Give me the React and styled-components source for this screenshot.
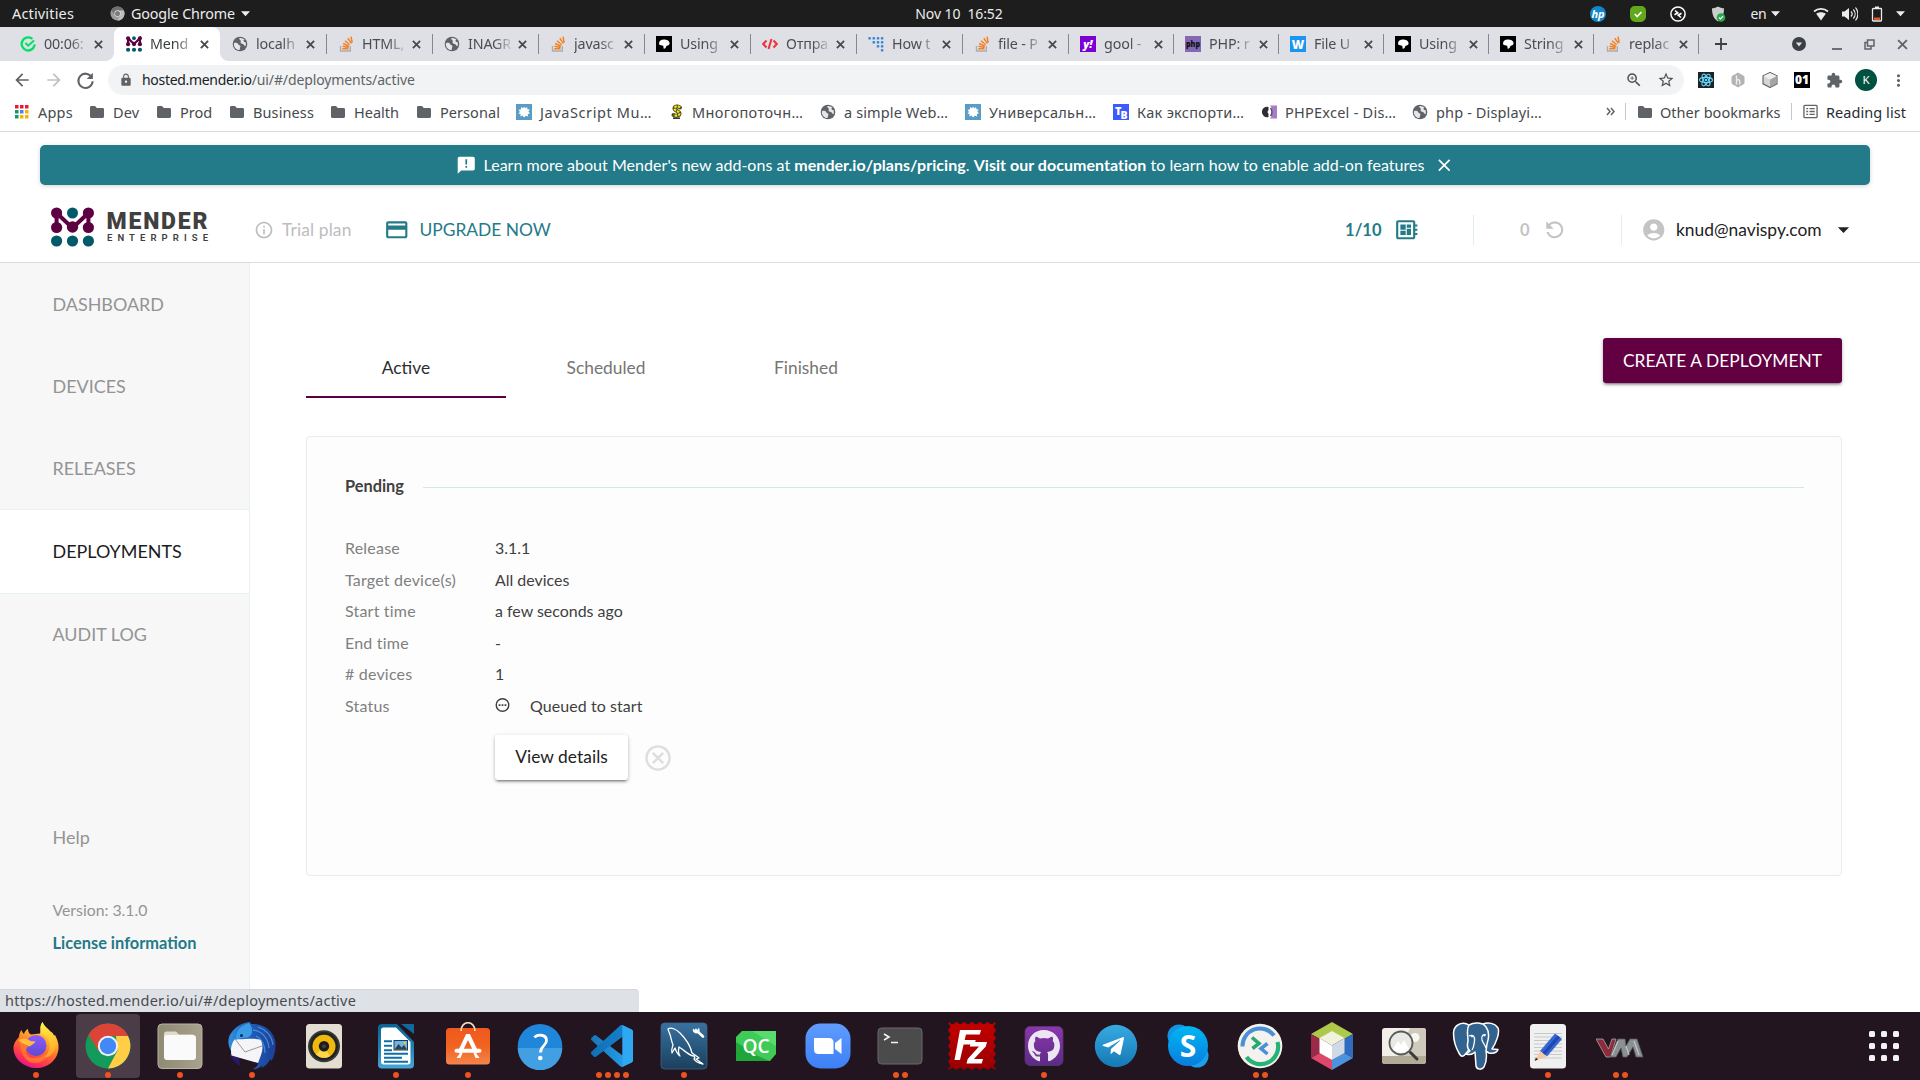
import React from "react";
import styled, { createGlobalStyle, css } from "styled-components";
import {
  MdAnnouncement,
  MdClose,
  MdInfoOutline,
  MdPayment,
  MdDeveloperBoard,
  MdRefresh,
  MdAccountCircle,
  MdArrowDropDown,
  MdLock,
  MdArrowBack,
  MdArrowForward,
  MdExtension,
  MdMoreVert,
  MdStarBorder,
  MdZoomIn,
} from "react-icons/md";
import { FaGithub, FaTelegramPlane } from "react-icons/fa";

const GlobalStyle = createGlobalStyle`
  *, *::before, *::after { box-sizing: border-box; }
  html, body { margin: 0; padding: 0; background: #fff; overflow: hidden; }
  svg { display: block; flex: none; }
`;

const uiFont = css`
  font-family: "Noto Sans", "Open Sans", sans-serif;
`;

const Desktop = styled.div`
  display: flex;
  flex-direction: column;
  width: 1920px;
  height: 1080px;
  overflow: hidden;
  ${uiFont}
`;

const Label = styled.span`
  white-space: pre;
  font-size: ${(p) => p.$size || 14.5}px;
  letter-spacing: ${(p) => p.$ls || 0}px;
  color: ${(p) => p.$color || "inherit"};
`;

/* ---------- system bar ---------- */

const SystemBar = styled.header`
  display: grid;
  grid-template-columns: 1fr auto 1fr;
  align-items: center;
  height: 27px;
  flex: none;
  padding: 0 14px 0 12px;
  background: #1d1d1d;
  color: #ececec;
  line-height: 27px;
`;

const SystemLeft = styled.div`
  display: flex;
  align-items: center;
`;

const AppMenu = styled.div`
  display: flex;
  align-items: center;
  gap: 6px;
  margin-left: 36px;
`;

const Tray = styled.div`
  display: flex;
  align-items: center;
  justify-content: flex-end;
`;

const TraySlot = styled.div`
  display: flex;
  align-items: center;
  justify-content: center;
  gap: 5px;
  width: ${(p) => p.$w}px;
  padding-right: ${(p) => p.$pr || 0}px;
`;

const Triangle = ({ size = 10, color = "#ececec" }) => (
  <svg width={size} height={size} viewBox="0 0 10 10">
    <path d="M0 2.5h10L5 8z" fill={color} />
  </svg>
);

/* ---------- browser chrome ---------- */

const TabStrip = styled.div`
  display: flex;
  height: 34px;
  flex: none;
  padding-left: 8px;
  background: #dee0e5;
`;

const BrowserTab = styled.div`
  display: flex;
  align-items: center;
  width: ${(p) => p.$w}px;
  height: 34px;
  padding-left: 12px;
  position: relative;
  color: ${(p) => (p.$active ? "#3c4043" : "#4a4d51")};
  background: ${(p) => (p.$active ? "#fff" : "transparent")};
  border-radius: ${(p) => (p.$active ? "8px 8px 0 0" : "0")};
  ${(p) =>
    p.$divider &&
    css`
      &::before {
        content: "";
        position: absolute;
        left: 0;
        top: 7px;
        width: 1px;
        height: 20px;
        background: #85888d;
      }
    `}
  ${(p) =>
    p.$active &&
    css`
      &::before,
      &::after {
        content: "";
        position: absolute;
        bottom: 0;
        width: 8px;
        height: 8px;
      }
      &::before {
        left: -8px;
        background: radial-gradient(circle at 0 0, transparent 7.5px, #fff 8px);
      }
      &::after {
        right: -8px;
        background: radial-gradient(circle at 100% 0, transparent 7.5px, #fff 8px);
      }
    `}
`;

const TabTitle = styled.div`
  width: 45px;
  margin-left: 8px;
  white-space: pre;
  font-size: 14.3px;
  letter-spacing: -0.15px;
  line-height: 24px;
  mask-image: linear-gradient(to right, #000 58%, rgba(0, 0, 0, 0.06) 100%);
`;

const TabClose = styled.div`
  margin-left: 5px;
`;

const StripEnd = styled.div`
  display: flex;
  flex: 1;
  align-items: center;
  position: relative;
  padding-left: 17px;
  &::before {
    content: "";
    position: absolute;
    left: 0;
    top: 7px;
    width: 1px;
    height: 20px;
    background: #85888d;
  }
`;

const WindowButtons = styled.div`
  display: flex;
  align-items: center;
  margin-left: auto;
  padding-right: 12px;
  gap: 22px;
`;

const Toolbar = styled.div`
  display: flex;
  align-items: center;
  height: 38px;
  flex: none;
  background: #fff;
  color: #5f6368;
`;

const NavButtons = styled.div`
  display: flex;
  align-items: center;
  gap: 12px;
  width: 108px;
  padding-left: 12px;
`;

const Omnibox = styled.div`
  display: flex;
  align-items: center;
  width: 1576px;
  height: 30px;
  padding: 0 9px 0 11px;
  border-radius: 15px;
  background: #f1f3f4;
`;

const Url = styled.div`
  flex: 1;
  display: flex;
  margin-left: 9px;
  line-height: 28px;
`;

const OmniActions = styled.div`
  display: flex;
  gap: 14px;
  color: #4d5156;
`;

const Extensions = styled.div`
  display: flex;
  align-items: center;
  padding-left: 6px;
`;

const ExtensionSlot = styled.div`
  display: flex;
  align-items: center;
  justify-content: center;
  width: 32px;
`;

const BookmarkBar = styled.div`
  display: flex;
  align-items: center;
  height: 33px;
  flex: none;
  padding: 0 0 7px 14px;
  background: #fff;
  border-bottom: 1px solid #dadce0;
  color: #46494d;
`;

const Bookmark = styled.div`
  display: flex;
  align-items: center;
  gap: ${(p) => p.$gap || 8}px;
  width: ${(p) => p.$w}px;
  height: 24px;
`;

const BarDivider = styled.div`
  width: 1px;
  height: 17px;
  background: #c4c7cc;
  margin: ${(p) => p.$m};
`;

const Chevrons = styled.div`
  margin-left: 8px;
`;

/* ---------- page ---------- */

const Page = styled.div`
  display: flex;
  flex-direction: column;
  height: 880px;
  flex: none;
  position: relative;
  background: #fff;
  font-family: Lato, "Open Sans", sans-serif;
  color: #404040;
`;

const Banner = styled.div`
  display: flex;
  align-items: center;
  justify-content: center;
  height: 40px;
  flex: none;
  margin: 13px 50px 0 40px;
  border-radius: 5px;
  background: #237a88;
  box-shadow: 0 1px 4px rgba(0, 0, 0, 0.18);
  color: #fff;
  font-size: 16px;
  white-space: pre;
`;

const BannerText = styled.div`
  margin: 0 9px 1px 7px;
  letter-spacing: 0.035px;
  b { font-weight: 700; }
`;

const AppHeader = styled.div`
  display: flex;
  align-items: center;
  height: 78px;
  flex: none;
  padding: 12px 0 0 50px;
  border-bottom: 1px solid #dedede;
  font-size: 17.4px;
`;

const PlanInfo = styled.div`
  display: flex;
  align-items: center;
  gap: 8px;
  width: 130px;
  margin-left: 43px;
  letter-spacing: 0.12px;
  color: #bdbdbd;
`;

const Upgrade = styled.div`
  display: flex;
  align-items: center;
  gap: 10px;
  color: #237a88;
`;

const HeaderRight = styled.div`
  display: flex;
  align-items: center;
  margin-left: auto;
`;

const Counter = styled.div`
  display: flex;
  align-items: center;
  justify-content: flex-end;
  width: ${(p) => p.$w}px;
  height: 30px;
  padding-right: ${(p) => p.$pr}px;
  gap: ${(p) => p.$gap}px;
  border-right: 1px solid #e3efee;
  color: ${(p) => p.$color};
  font-weight: 700;
  font-size: 16.5px;
`;

const User = styled.div`
  display: flex;
  align-items: center;
  width: 298px;
  padding-left: 19px;
  color: #222;
`;

const UserName = styled.span`
  margin: 0 8px 0 9.5px;
`;

const Flip = styled.span`
  transform: scaleX(-1);
`;

const Body = styled.div`
  display: flex;
  flex: 1;
`;

const Sidebar = styled.nav`
  display: flex;
  flex-direction: column;
  width: 250px;
  flex: none;
  background: #f7f7f7;
  border-right: 1px solid #e6f2f1;
`;

const NavItem = styled.div`
  display: flex;
  align-items: center;
  height: ${(p) => (p.$active ? 85 : 82)}px;
  padding: 0 0 1px 52.5px;
  margin-bottom: ${(p) => (p.$active ? -1 : 0)}px;
  font-size: 17.95px;
  color: ${(p) => (p.$active ? "#1c1c1c" : "#949494")};
  background: ${(p) => (p.$active ? "#fff" : "transparent")};
  border-style: solid;
  border-color: #e6f2f1;
  border-width: ${(p) => (p.$active ? "1px 0" : "0")};
`;

const SidebarFooter = styled.div`
  margin-top: 150px;
  padding-left: 52.5px;
  color: #949494;
`;

const Help = styled.div`
  font-size: 18px;
  line-height: 24px;
`;

const Version = styled.div`
  margin-top: 50px;
  font-size: 15.8px;
  line-height: 22px;
`;

const License = styled.div`
  margin-top: 11px;
  font-size: 16.4px;
  line-height: 22px;
  font-weight: 700;
  color: #237a88;
`;

const Main = styled.main`
  flex: 1;
  padding: 75px 78px 0 56px;
`;

const MainTop = styled.div`
  display: flex;
  justify-content: space-between;
  align-items: flex-start;
`;

const TabList = styled.div`
  display: flex;
`;

const PageTab = styled.div`
  display: flex;
  align-items: center;
  justify-content: center;
  width: 200px;
  height: 60px;
  padding-top: 1px;
  font-size: 17.35px;
  color: ${(p) => (p.$active ? "#2e2e2e" : "#757575")};
  border-bottom: 2px solid ${(p) => (p.$active ? "#5d0041" : "transparent")};
`;

const Button = styled.button`
  display: flex;
  align-items: center;
  justify-content: center;
  width: ${(p) => p.$w}px;
  height: 45px;
  padding: 0 0 ${(p) => (p.$primary ? 0 : 2)}px;
  border: 0;
  border-radius: 3px;
  font-family: inherit;
  font-size: 17.35px;
  letter-spacing: 0.05px;
  color: ${(p) => (p.$primary ? "#fff" : "#222")};
  background: ${(p) => (p.$primary ? "#620042" : "#fff")};
  box-shadow: 0 3px 2px -2px rgba(0, 0, 0, 0.3), 0 2px 3px rgba(0, 0, 0, 0.2),
    0 1px 5px rgba(0, 0, 0, 0.14);
`;

const Card = styled.section`
  height: 440px;
  margin-top: 38px;
  padding: 37px 37px 0 38px;
  background: #fdfdfd;
  border: 1px solid #ebebeb;
  border-radius: 4px;
`;

const SectionTitle = styled.div`
  display: flex;
  align-items: center;
  gap: 19px;
  line-height: 24px;
  font-size: 16.35px;
  font-weight: 700;
  &::after {
    content: "";
    flex: 1;
    height: 1px;
    margin-top: 2px;
    background: #d3e8e5;
  }
`;

const Details = styled.div`
  display: grid;
  grid-template-columns: 150px auto;
  grid-auto-rows: 31.5px;
  align-items: center;
  margin-top: 34px;
  font-size: 15.95px;
`;

const Term = styled.div`
  font-size: 16px;
  letter-spacing: 0.2px;
  color: #808080;
`;

const Value = styled.div`
  display: flex;
  align-items: center;
  color: #404040;
`;

const StatusText = styled.span`
  margin-left: 20px;
  letter-spacing: 0.1px;
`;

const Actions = styled.div`
  display: flex;
  align-items: center;
  gap: 17px;
  margin: 14px 0 0 150px;
`;

const StatusBubble = styled.div`
  position: absolute;
  left: 0;
  bottom: 0;
  width: 639px;
  height: 23px;
  padding-left: 5px;
  background: #dee1e6;
  border-top: 1px solid #d3d6da;
  border-radius: 0 4px 0 0;
  color: #484b4f;
  line-height: 21px;
  ${uiFont}
`;

/* ---------- dock ---------- */

const Dock = styled.footer`
  display: flex;
  align-items: flex-start;
  gap: 8px;
  height: 68px;
  flex: none;
  padding: 2px 12px 0 4px;
  background: #22151f;
`;

const DockCell = styled.div`
  display: flex;
  flex-direction: column;
  align-items: center;
  width: 64px;
  height: 64px;
  padding-top: 8px;
  border-radius: 4px;
  background: ${(p) => (p.$active ? "#4a3d47" : "transparent")};
`;

const Dots = styled.div`
  display: flex;
  gap: 3px;
  margin-top: 2px;
`;

const Dot = styled.i`
  width: 6px;
  height: 6px;
  border-radius: 50%;
  background: #e95420;
`;

const AppGrid = styled.div`
  display: grid;
  grid-template-columns: repeat(3, 6px);
  gap: 6px;
  margin: 17px 9px 0 auto;
`;

const GridDot = styled.i`
  width: 6px;
  height: 6px;
  border-radius: 1.5px;
  background: #f2f2f2;
`;

/* ---------- small icons ---------- */

const S = ({ s = 16, children }) => (
  <svg width={s} height={s} viewBox="0 0 16 16">
    {children}
  </svg>
);

const Globe = () => (
  <S>
    <circle cx="8" cy="8" r="7.3" fill="#5f6368" />
    <path d="M1.900 7.200c2-.9 4-.2 4.300 1 .3 1.200 1.900.6 2.200 1.700.3 1.100-.7 1.500-.5 2.500.1.800-.4 1.400-.8 1.700C4.300 13.800 1.900 11.500 1.900 8z" fill="#e4e6ea" />
    <path d="M7.200 2.200c1.600-.5 4.100.2 5.300 1.800-.9 0-1.300.6-.9 1.300.4.700 1.300.7 1.900.9.500.9.600 2.700-.2 4-.9-.1-1-1.100-1.700-1.800-.9-.8-2.300-.2-2.800-1.300C8.300 5.900 9 5.500 8.800 4.700 8.600 3.900 7.100 3.500 7.200 2.200z" fill="#e4e6ea" />
  </S>
);

const StackIcon = () => (
  <S>
    <path d="M2.500 10v5h9.800v-5" fill="none" stroke="#a9adb2" strokeWidth="1.400" />
    <g stroke="#f48024" strokeWidth="1.500" fill="none">
      <path d="M4.300 12.800h6.200M4.500 10.300l6.100 1.200M5.200 7.500l5.600 2.700M7 4.700l4.700 4M9.800 2.300l3.600 5.100M13 .6l1.200 6" />
    </g>
  </S>
);

const BlackHead = () => (
  <S>
    <path d="M0 0h16v16H0z" fill="#000" />
    <path d="M3 7.500C3 5 5 3.500 8 3.500c2.500 0 5.300 1 5.600 3.500.1 1.800-1.500 2.600-3 2.700L9.500 12 7.800 13l-.6-3.200L5 9.300C3.800 9 3 8.500 3 7.500z" fill="#fff" />
  </S>
);

const MenderMark = () => (
  <svg width="16" height="16" viewBox="0 0 43 43">
    <path d="M5.600 6v15M5.600 6l15.900 15.500L37.400 6v15" stroke="#5d0041" strokeWidth="6" fill="none" />
    <g fill="#5d0041">
      <circle cx="5.600" cy="6" r="5.600" />
      <circle cx="37.400" cy="6" r="5.600" />
      <circle cx="5.600" cy="22" r="5.600" />
      <circle cx="21.500" cy="21.500" r="5.800" />
      <circle cx="37.400" cy="22" r="5.600" />
    </g>
    <g fill="#015969">
      <circle cx="21.500" cy="6" r="5" />
      <circle cx="5.600" cy="37" r="5.600" />
      <circle cx="21.500" cy="37" r="5.600" />
      <circle cx="37.400" cy="37" r="5.600" />
    </g>
  </svg>
);

const ClockCheck = () => (
  <S>
    <path d="M11.500 2.300A6.500 6.500 0 1 0 14.500 9.500" fill="none" stroke="#03e066" strokeWidth="2.400" strokeLinecap="round" />
    <path d="M6 7.500l2.200 2.200L13.500 5" fill="none" stroke="#03e066" strokeWidth="2" strokeLinecap="round" />
  </S>
);

const CodeTag = () => (
  <S>
    <path d="M4.500 4.500L1.200 8l3.300 3.500M11.500 4.500L14.800 8l-3.300 3.500M9.500 3l-3 10" fill="none" stroke="#f0323c" strokeWidth="2" />
  </S>
);

const BlueDots = () => (
  <S>
    <g fill="#3f86d8">
      {[[1.5, 1], [5.700, 1], [9.900, 1], [14, 1], [5.700, 5], [9.900, 5], [14, 5], [9.900, 9], [14, 9], [14, 13]].map(([x, y]) => (
        <rect key={`${x}-${y}`} x={x - 1.2} y={y} width="2.600" height="2.600" rx="0.900" />
      ))}
    </g>
  </S>
);

const LetterTile = ({ bg, color = "#fff", text, size = 11, x = 8, y = 12, italic, len }) => (
  <S>
    <path d="M0 0h16v16H0z" fill={bg} />
    <text x={x} y={y} textAnchor="middle" fontFamily="Open Sans, sans-serif" fontWeight="800" fontSize={size} fontStyle={italic ? "italic" : "normal"} fill={color} textLength={len} lengthAdjust="spacingAndGlyphs">
      {text}
    </text>
  </S>
);

const TBIcon = () => (
  <S>
    <path d="M0 0h16v16H0z" fill="#3b5bfd" />
    <text x="5.300" y="10.500" textAnchor="middle" fontFamily="Open Sans, sans-serif" fontWeight="800" fontSize="11" fill="#fff">T</text>
    <text x="11" y="14.500" textAnchor="middle" fontFamily="Open Sans, sans-serif" fontWeight="800" fontSize="10.500" fill="#fff">B</text>
  </S>
);

const BlueSplat = () => (
  <S>
    <path d="M0 0h16v16H0z" fill="#5a9dc4" />
    <path d="M8 2.500l1.200 1.800 2-1.300.2 2.300 2.400.3-1.400 2L14 9.500l-2.200.6.300 2.400-2.200-.8L8 13.500l-1.400-1.900-2.200.9.300-2.400L2.300 9.500 4 8 2.500 5.800l2.300-.4.400-2.300 2 1.200z" fill="#fff" />
  </S>
);

const Snake = () => (
  <S>
    <path d="M10 3.500C8.500 1.800 4.500 2 4.500 4.500S9.500 7 9.500 9.500 5.500 12 3.500 11" fill="none" stroke="#4a4a1c" strokeWidth="4" strokeLinecap="round" />
    <path d="M10 3.500C8.500 1.800 4.500 2 4.500 4.500S9.500 7 9.500 9.500 5.500 12 3.500 11" fill="none" stroke="#f1e51c" strokeWidth="2.200" strokeDasharray="2.500 1" />
    <path d="M3 14.200h7" stroke="#222" strokeWidth="1.400" />
  </S>
);

const BracketMark = () => (
  <S>
    <path d="M7.500 3v3.200a2.200 2.200 0 0 0 0 3.600V13a5.200 5.200 0 1 1 0-10z" fill="#2b2f31" />
    <path d="M9 1.500h7v13H9c3.200-3 3.200-10 0-13z" fill="#a77bc6" />
    <path d="M9.500 4c2 2 2 6 0 8" fill="none" stroke="#5d3b78" strokeWidth="1.500" />
  </S>
);

const AppsIcon = () => {
  const colors = ["#ea1a36", "#ea1a36", "#ea1a36", "#0f9d58", "#4285f4", "#f4b400", "#0f9d58", "#f4b400", "#f4b400"];
  return (
    <S>
      {colors.map((c, i) => (
        <rect key={i} x={1 + (i % 3) * 5} y={1 + Math.floor(i / 3) * 5} width="3.500" height="3.500" fill={c} />
      ))}
    </S>
  );
};

const FolderIcon = () => (
  <S>
    <path d="M1 3.500C1 2.700 1.500 2 2.300 2H6l1.800 2h5.900c.8 0 1.300.6 1.300 1.400v7.200c0 .8-.5 1.400-1.300 1.400H2.300C1.500 14 1 13.400 1 12.600z" fill="#5f6368" />
  </S>
);

const Cross = ({ s = 9, color = "#45484c", w = 1.8 }) => (
  <svg width={s} height={s} viewBox="0 0 9 9">
    <path d="M.9.9l7.200 7.200M8.100.9L.9 8.100" stroke={color} strokeWidth={w} />
  </svg>
);

const ReloadIcon = () => (
  <S s={19}>
    <path d="M13.200 5.200A6 6 0 1 0 14 8.600" fill="none" stroke="#5f6368" strokeWidth="1.700" />
    <path d="M14.200 1.500v5.200H9z" fill="#5f6368" />
  </S>
);

const CancelIcon = () => (
  <svg width="26" height="26" viewBox="0 0 26 26">
    <circle cx="13" cy="13" r="11.600" fill="none" stroke="#dedede" strokeWidth="2.400" />
    <path d="M7.800 7.800l10.400 10.400M18.200 7.800L7.800 18.200" stroke="#dedede" strokeWidth="2.500" />
  </svg>
);

/* ---------- dock icons ---------- */

const D = ({ children }) => (
  <svg width="48" height="48" viewBox="0 0 48 48">
    {children}
  </svg>
);

const Grad = ({ id, stops, horizontal }) => (
  <linearGradient id={id} x1="0" y1="0" x2={horizontal ? 1 : 0} y2={horizontal ? 0 : 1}>
    {stops.map((c, i) => (
      <stop key={i} offset={i / (stops.length - 1)} stopColor={c} />
    ))}
  </linearGradient>
);

const Firefox = () => (
  <D>
    <defs>
      <linearGradient id="ffBody" x1="0.8" y1="0" x2="0.35" y2="1">
        <stop offset="0" stopColor="#fff44f" />
        <stop offset="0.35" stopColor="#ffb02e" />
        <stop offset="0.6" stopColor="#ff6a2e" />
        <stop offset="0.85" stopColor="#ff2f58" />
        <stop offset="1" stopColor="#e31587" />
      </linearGradient>
      <Grad id="ffCore" stops={["#9059ff", "#5b4bd0"]} />
      <Grad id="ffFlame" stops={["#fff44f", "#ffc531", "#ff9a2b"]} />
    </defs>
    <path d="M7 15c0-3 1-5 2.500-7 .5 2 1.500 3 2.500 4 .8-2.500 2-4 4-5 0 3 1 4.500 3 5.500l9-1C29 7 28 4 30.500 0c1.500 4 5 6 8 9.500 2 1 3 2.500 3.500 4l1-.5C45 17 47 21 46.500 26 46 38 36 46 24.500 46S2 38 1.500 26.500C1.300 22 4 18 7 15z" fill="url(#ffBody)" />
    <path d="M30.500 0c-3 4-2.500 8-.5 12 6 3 9 9 7 16-1 4-4 7-7 8.500C41 35 46 27 43 16 39 9 32 6 30.500 0z" fill="url(#ffFlame)" />
    <circle cx="24" cy="23.500" r="10.500" fill="url(#ffCore)" />
    <path d="M8 18c4-1 7 0 9 2l3 3c-5 1-7 4-6 8 1 3 4 5 8 5 6 0 10-2 12-6 1 7-4 11-11 11C13 41 8 30 8 18z" fill="#ff7a2b" opacity="0.850" />
    <path d="M6.500 18c4-2.500 9-2 12 1l5 .5c-1 2.500-4 3-6 5C14 22 9 22 6.500 18z" fill="#ffbd3a" />
  </D>
);

const Chrome = ({ size = 48, gray }) => (
  <svg width={size} height={size} viewBox="0 0 48 48">
    <circle cx="24" cy="24" r="22.500" fill={gray ? "#9c9c9c" : "#149b5c"} />
    <path d="M24 24L4.500 12.800A22.500 22.500 0 0 1 43.500 12.800L44 14H24z" fill={gray ? "#6f6f6f" : "#dc4437"} />
    <path d="M44 14A22.500 22.500 0 0 1 24 46.500L33.500 28.500 32 14z" fill={gray ? "#bdbdbd" : "#ffce44"} />
    <path d="M4.500 12.800L14.500 29l9.500-15z" fill={gray ? "#6f6f6f" : "#dc4437"} />
    <circle cx="24" cy="24" r="10.200" fill={gray ? "#e4e4e4" : "#f1f1f1"} />
    <circle cx="24" cy="24" r="8.200" fill={gray ? "#7d7d7d" : "#4388f7"} />
  </svg>
);

const Files = () => (
  <D>
    <defs><Grad id="fl" stops={["#8f8a74", "#a8a18d"]} horizontal /></defs>
    <rect x="2" y="2" width="44" height="44.500" rx="4" fill="url(#fl)" stroke="#b8b3a2" />
    <path d="M8 12c0-1.500 1-2.500 2.500-2.500h9c2 0 2 3 4.500 3h13V20H8z" fill="#dedacd" />
    <rect x="8" y="13" width="32" height="25" rx="3" fill="#fafafa" />
  </D>
);

const Thunderbird = () => (
  <D>
    <defs><Grad id="tb" stops={["#2f8fe0", "#1f5cb8", "#1d3f96"]} horizontal /></defs>
    <path d="M14 2c5-2 8-2 8-2l1 2c14-1 23 8 24.500 18 .5 8-1 14-4 19l-1-2c-2 4-5 7-9 9l1-3c-4 4-8 4.500-10 4 3-1 5-3 6-6L8 34C2 30-1 22 1 15 3 10 8 4 14 2z" fill="url(#tb)" />
    <path d="M2 32c2 6 6 10 11 12-2-3-2-6-1-8z" fill="#2a1a63" />
    <path d="M7 17c6 1 20-2 26 1 2 5 2 10 0 15l-3 8L3.500 33.500C2 27 4 20 7 17z" fill="#f5f5f7" />
    <path d="M7 17l10 13 17-6" fill="none" stroke="#8d8d98" strokeWidth="0.900" />
    <path d="M8 15C9 7 14 3 21 1c4 5 4 10 1 13-4 3-9 1-14 4z" fill="#3b9ce6" />
    <circle cx="13.500" cy="13.500" r="1.500" fill="#15264f" />
    <path d="M25 8c9 1 15 8 16 18M28 14c6 3 9 9 9 17M30 5c9 3 14 10 15 18" stroke="#5fb4f0" strokeWidth="1.300" fill="none" opacity="0.600" />
  </D>
);

const Rhythmbox = () => (
  <D>
    <rect x="6" y="2" width="36" height="44.500" rx="3.500" fill="#e2ded2" />
    <circle cx="24" cy="24.300" r="16" fill="#3a3a3a" />
    <circle cx="24" cy="24.300" r="14.200" fill="#222" />
    <circle cx="24" cy="24.300" r="11.500" fill="#eeb80f" />
    <path d="M24 24.300l-8 8.200A11.500 11.500 0 0 0 30 34.200z" fill="#ffd84a" />
    <circle cx="24" cy="24.300" r="5.200" fill="#1d1d1d" />
    <circle cx="24" cy="24.300" r="2" fill="#3f3f3f" />
  </D>
);

const Writer = () => (
  <D>
    <defs><Grad id="wr" stops={["#0a6394", "#1f7fb2", "#45a6d8"]} /></defs>
    <path d="M10 2h15l17 18v23c0 2-1.500 3.500-3.500 3.500H9.500C7.500 46.500 6 45 6 43V6c0-2.500 1.500-4 4-4z" fill="url(#wr)" />
    <path d="M29 2h12c.7 0 1 .5 1 1v9z" fill="#106a9d" />
    <path d="M9 8c0-1.500 1-2.500 2.500-2.500H24L38.500 20v20c0 1.500-1 2.500-2.500 2.500H11.500C10 42.500 9 41.500 9 40z" fill="#fff" />
    <path d="M12 19h8M12 23.500h8M12 28h8M12 31.500h24M12 35.500h18M12 39.500h24" transform="translate(0 .3)" stroke="#106fa5" strokeWidth="1.900" />
    <rect x="22" y="18.500" width="13.500" height="9.500" fill="#6fb5e4" stroke="#123f66" strokeWidth="1" />
    <path d="M22.500 27.500l4-5.500 3 3.500 2.500-2.500 3 4.500z" fill="#39413f" />
    <circle cx="32.800" cy="20.800" r="1.300" fill="#f3c22d" />
  </D>
);

const Software = () => (
  <D>
    <defs><Grad id="sw" stops={["#f0581f", "#f2631f", "#f4854e"]} /></defs>
    <rect x="2" y="6" width="44" height="36.500" rx="3.500" fill="url(#sw)" />
    <path d="M17 9c0-11 14-11 14 0" fill="none" stroke="#f6d9b8" strokeWidth="1.700" />
    <path d="M15.500 31L24 13l8.500 18" fill="none" stroke="#fff" strokeWidth="4.200" strokeLinejoin="bevel" />
    <path d="M12.500 28.800h23" stroke="#fff" strokeWidth="4" strokeLinecap="round" />
    <path d="M16 31l-3.500 5h4l2-5zM32 31l3.500 5h-4l-2-5z" fill="#fff" />
  </D>
);

const HelpIcon = () => (
  <D>
    <circle cx="24" cy="24.300" r="22.300" fill="#1f86d9" />
    <path d="M1.700 26a22.300 22.300 0 0 0 44.600 0z" fill="#429fe1" />
    <path d="M18.500 15.500c2.500-3.500 12-3.500 12 3 0 5-6 5.500-6 12" fill="none" stroke="#fff" strokeWidth="2.800" />
    <circle cx="24.300" cy="36" r="2.300" fill="#fff" />
  </D>
);

const VSCode = () => (
  <D>
    <defs><Grad id="vs" stops={["#1b74b8", "#1f8fd8", "#2aa3ef"]} horizontal /></defs>
    <g transform="translate(3 3) scale(1.75)">
      <path d="M23.150 2.587L18.210.210a1.494 1.494 0 0 0-1.705.290l-9.460 8.630-4.120-3.128a.999.999 0 0 0-1.276.057L.327 7.261A1 1 0 0 0 .326 8.740L3.899 12 .326 15.260a1 1 0 0 0 .001 1.479L1.650 17.940a.999.999 0 0 0 1.276.057l4.120-3.128 9.460 8.630a1.492 1.492 0 0 0 1.704.290l4.942-2.377A1.500 1.500 0 0 0 24 20.060V3.939a1.500 1.500 0 0 0-.850-1.352zm-5.146 14.861L10.826 12l7.178-5.448v10.896z" fill="url(#vs)" />
      <path d="M3.899 12L.326 15.260a1 1 0 0 0 .001 1.479L1.650 17.940a1 1 0 0 0 1.276.057l4.120-3.128L10.826 12 18 6.552V.200a1.500 1.500 0 0 0-1.500.300z" fill="#0b6cb5" opacity="0.600" />
      <path d="M18 .200V23.800l5.150-2.400c.5-.240.850-.750.850-1.340V3.939c0-.580-.330-1.100-.850-1.352z" fill="#2fa8f3" />
    </g>
  </D>
);

const Workbench = () => (
  <D>
    <defs><Grad id="wb" stops={["#39719f", "#28597f", "#1c3f5c"]} /></defs>
    <rect x="1" y="1" width="46" height="46" rx="3.500" fill="url(#wb)" stroke="#3b6488" strokeWidth="0.800" />
    <path d="M12 31c-1-3 0-5 1-8-2-5-2-9-4-13l-1-3c3-2 8 0 12 4 5 5 10 11 12 20 3 2 5 3 7 5l-3 1 7 5c-5-1-8-3-9-5 1-1 1-2 0-3-4 0-8-4-12-7-1-1-2-1-3-2-1 4-1 6 1 9-3-2-4-5-5-8-1 2-2 3-3 5z" fill="none" stroke="#fff" strokeWidth="1.300" strokeLinejoin="round" />
    <path d="M36 8l7 6.500" stroke="#fff" strokeWidth="2.600" strokeLinecap="round" />
    <path d="M33 6.500a3.600 3.600 0 0 0 5 4.500 3.600 3.600 0 0 0 .6-5.500l-.6 2.500-2.600.6z" fill="#fff" />
  </D>
);

const QtCreator = () => (
  <D>
    <path d="M10 9h34v23l-6 7H4V15z" fill="#3fcb57" />
    <path d="M4 20l22 14 12 5H4z" fill="#20a53b" />
    <path d="M20 9h24v15z" fill="#58dc6e" />
    <text x="24" y="30.500" textAnchor="middle" fontFamily="Open Sans, sans-serif" fontWeight="600" fontSize="19" fill="#fff" textLength="27" lengthAdjust="spacingAndGlyphs">QC</text>
  </D>
);

const Zoom = () => (
  <D>
    <defs><Grad id="zm" stops={["#5f9cff", "#3d80f5"]} /></defs>
    <rect x="1.500" y="1.500" width="45" height="45" rx="15" fill="url(#zm)" />
    <path d="M10 16h15c3 0 4.500 1.500 4.500 4.500V32h-15c-3 0-4.500-1.500-4.500-4.500zM31 21l6.500-5v16L31 27z" fill="#fff" />
  </D>
);

const Terminal = () => (
  <D>
    <rect x="2" y="6" width="44" height="36" rx="3.500" fill="#4b4b4b" stroke="#686868" strokeWidth="1" />
    <path d="M8 12l5 3-5 3M15 20.500h7" fill="none" stroke="#f2f2f2" strokeWidth="1.600" />
  </D>
);

const FileZilla = () => (
  <D>
    <defs><Grad id="fz" stops={["#c30000", "#9a0000"]} /></defs>
    <path d="M.5.5h47v47H.5z" fill="url(#fz)" />
    <g fill="#22151f">
      {[4.500, 12.300, 20.100, 27.900, 35.700, 43.500].map((v) => (
        <React.Fragment key={v}>
          <circle cx={v} cy="0" r="2.300" />
          <circle cx={v} cy="48" r="2.300" />
          <circle cx="0" cy={v} r="2.300" />
          <circle cx="48" cy={v} r="2.300" />
        </React.Fragment>
      ))}
    </g>
    <path d="M12 8h21l-1.200 4.500H18l-1.300 5.500h11l-1.200 4.500H15.600L12 38H6.500z" fill="#fff" />
    <path d="M23 20h16l-1.200 4.500L26 37h9l-1.200 4.500H18.500l1.200-4.500L31 24.500h-9.200z" fill="#fff" />
  </D>
);

const GitHubDesk = () => (
  <D>
    <defs><Grad id="gh" stops={["#8c36ae", "#5c2b86"]} /></defs>
    <rect x="5" y="4.500" width="38" height="39" rx="5" fill="url(#gh)" stroke="#57396f" strokeWidth="0.800" />
    <FaGithub x="7.500" y="7.500" size={33} color="#ece6f2" />
  </D>
);

const Telegram = () => (
  <D>
    <defs><Grad id="tg" stops={["#37aae2", "#1578b4"]} /></defs>
    <circle cx="24" cy="24" r="21.200" fill="url(#tg)" />
    <FaTelegramPlane x="9" y="12" size={24.500} color="#fff" />
  </D>
);

const Skype = () => (
  <D>
    <defs><Grad id="sk" stops={["#00b7f5", "#0a7ddd"]} /></defs>
    <circle cx="15" cy="14" r="11.500" fill="#1393e0" />
    <circle cx="33" cy="34" r="11.500" fill="#18a1e8" />
    <circle cx="24" cy="24" r="20" fill="url(#sk)" />
    <text x="24" y="35" textAnchor="middle" fontFamily="Open Sans, sans-serif" fontWeight="700" fontSize="30" fill="#fff">S</text>
  </D>
);

const Remote = () => (
  <D>
    <circle cx="24" cy="24" r="22.300" fill="#f4f2ee" />
    <path d="M6.500 24.500A17.500 17.500 0 0 1 38 13.500" fill="none" stroke="#4a90d9" strokeWidth="4" />
    <path d="M41.500 20A17.500 17.500 0 0 1 10.500 35" fill="none" stroke="#27b376" strokeWidth="4.200" />
    <path d="M16 15.500l7 6-6.500 5" fill="none" stroke="#27a86c" strokeWidth="3.600" />
    <path d="M31.500 21.500l-6.500 5 6.500 5.500" fill="none" stroke="#4a90d9" strokeWidth="3.600" />
  </D>
);

const NetBeans = () => (
  <D>
    <path d="M24 0l21 12-9 5-12-7-12 7-9-5z" fill="#aec84a" />
    <path d="M3 12l9 5v14l-9 5z" fill="#9a2a48" />
    <path d="M45 12l-9 5v14l9 5z" fill="#2f6cc0" />
    <path d="M3 36l9-5 12 7v10z" fill="#de4769" />
    <path d="M45 36l-9-5-12 7v10z" fill="#4c93de" />
    <path d="M24 9l12.500 7L24 23.500 11.500 16z" fill="#eff2dc" />
    <path d="M11.500 16L24 23.500V38l-12.500-7z" fill="#fff" />
    <path d="M36.500 16L24 23.500V38l12.500-7z" fill="#cfdae5" />
  </D>
);

const ImageViewer = () => (
  <D>
    <rect x="2" y="6" width="44" height="36" rx="3" fill="#f1efe8" />
    <path d="M30 6h13c2 0 3 1 3 3v25H18z" fill="#cfcabb" />
    <path d="M2 34h44v5c0 2-1 3-3 3H5c-2 0-3-1-3-3z" fill="#b1ab98" />
    <circle cx="35" cy="15.500" r="4.500" fill="#f7f7f4" />
    <circle cx="21" cy="21" r="11.500" fill="#e9e9e6" stroke="#5a5a58" strokeWidth="1.800" />
    <path d="M13 27l5-8 3 4 3-5 5 9c-4 5-12 5-16 0z" fill="#fff" />
    <path d="M30.500 30.500l6.500 6.500" stroke="#3a3a38" strokeWidth="3" strokeLinecap="round" />
  </D>
);

const Postgres = () => (
  <D>
    <g fill="#32638e" stroke="#fff" strokeWidth="1.500" strokeLinejoin="round">
      <path d="M15 2C9 0 2 3 1.500 11c0 7 3 16 6 21 2 3.500 4 2.500 6 0l5-6 2-20z" />
      <path d="M31 2c5-2 12-1 15 4 2 5-2 15-6 21l6 .5c-1 3-5 4-9 3.500l-5-3-3-20z" />
      <path d="M17 3c5-3 14-3 17 2 3 4 3 11 1 17l-1 7c1 6 0 12-2 16-2 3-7 3-8-1l-1-14c-3 3-6 3-9 2l4-3c-3-2-3-6-2-10 0-6-2-12 1-16z" />
    </g>
    <path d="M17 14c4-1.500 6 0 5.500 5-.5 3-.5 6-2.500 9M34 13c-3-1-5 1-4 5 1 3 3 5 4 8" fill="none" stroke="#fff" strokeWidth="1.300" />
    <circle cx="20" cy="14.500" r="0.900" fill="#fff" />
    <circle cx="32.500" cy="13.500" r="0.900" fill="#fff" />
  </D>
);

const Notes = () => (
  <D>
    <rect x="6" y="2" width="36" height="44.500" rx="3.500" fill="#f0f0f0" />
    <path d="M10 11.500h28M10 15h28M10 18.500h28M10 22h28M10 25.500h28M10 29h28M10 32.500h28M10 36h28" stroke="#c9c9c9" strokeWidth="1" />
    <path d="M31 11.500l7 5.500-15 17.500-7-5.500z" fill="#3566d6" />
    <path d="M33.500 13.500l2.400 1.900L20.800 33l-2.400-2z" fill="#1f49b0" />
    <path d="M16 29l7 5.500-12.500 4.500z" fill="#f6c9a2" />
    <path d="M12 35.500l2 2-3.500 1.500z" fill="#2b2b2b" />
  </D>
);

const VirtualMachine = () => (
  <D>
    <path d="M0 17h7l5.500 10L16 17h4l-5.500 18H10z" fill="#8e2a3c" stroke="#a8a8a8" strokeWidth="0.800" />
    <path d="M14 35l8-18h7l1 7 4-7h7l6 18h-7l-3-10-6 10h-4l-2-9-5 9z" fill="#8b9092" stroke="#55595b" strokeWidth="0.800" />
    <path d="M22 19l-6 14M30 24l3 9M38 19l5 14" stroke="#c3c6c7" strokeWidth="1.200" />
  </D>
);

/* ---------- data ---------- */

const YahooIcon = () => <LetterTile bg="#7a00d4" text="y!" italic size={11} />;
const PhpIcon = () => <LetterTile bg="#8467b5" color="#111" text="php" size={9} y={11} len={14} />;
const WIcon = () => <LetterTile bg="#1a96f0" text="W" size={12} y={12.5} />;

const browserTabs = [
  ["00:06:", ClockCheck],
  ["Mend", MenderMark],
  ["localh", Globe],
  ["HTML,", StackIcon],
  ["INAGR", Globe],
  ["javasc", StackIcon],
  ["Using", BlackHead],
  ["Отпра", CodeTag],
  ["How t", BlueDots],
  ["file - P", StackIcon],
  ["gool -", YahooIcon],
  ["PHP: r", PhpIcon],
  ["File U", WIcon],
  ["Using", BlackHead],
  ["String", BlackHead],
  ["replac", StackIcon],
];

const bookmarks = [
  ["Apps", AppsIcon, 75, 0.2],
  ["Dev", FolderIcon, 67, 0.2],
  ["Prod", FolderIcon, 73, 0],
  ["Business", FolderIcon, 101, 0.11],
  ["Health", FolderIcon, 86, 0],
  ["Personal", FolderIcon, 100, 0.06],
  ["JavaScript Mu…", BlueSplat, 154, 0.6],
  ["Многопоточн…", Snake, 150, 0.38, 6],
  ["a simple Web…", Globe, 145, 0.12],
  ["Универсальн…", BlueSplat, 148, 0.3],
  ["Как экспорти…", TBIcon, 148, 0.3],
  ["PHPExcel - Dis…", BracketMark, 151, 0.25],
  ["php - Displayi…", Globe, 186, 0.14],
];

const navItems = ["DASHBOARD", "DEVICES", "RELEASES", "DEPLOYMENTS", "AUDIT LOG"];

const dockApps = [
  [Firefox, 1], [Chrome, 1, true], [Files, 1], [Thunderbird, 1], [Rhythmbox, 0], [Writer, 1],
  [Software, 1], [HelpIcon, 0], [VSCode, 4], [Workbench, 1], [QtCreator, 0], [Zoom, 0],
  [Terminal, 2], [FileZilla, 0], [GitHubDesk, 1], [Telegram, 0], [Skype, 0], [Remote, 2],
  [NetBeans, 0], [ImageViewer, 0], [Postgres, 0], [Notes, 1], [VirtualMachine, 2],
];

const PendingIcon = () => (
  <S s={15}>
    <circle cx="8" cy="7.500" r="6.700" fill="none" stroke="#404040" strokeWidth="1.500" />
    <path d="M3.900 6.600h1.900v1.900H3.900zM7.050 6.600h1.900v1.900h-1.900zM10.200 6.600h1.900v1.900h-1.900z" fill="#404040" />
  </S>
);

const details = [
  ["Release", "3.1.1"],
  ["Target device(s)", "All devices"],
  ["Start time", "a few seconds ago"],
  ["End time", "-"],
  ["# devices", "1"],
  ["Status", <React.Fragment key="s"><PendingIcon /><StatusText>Queued to start</StatusText></React.Fragment>],
];

const BrandLogo = () => (
  <svg width="161" height="49" viewBox="0 0 161 49">
    <svg x="1" y="2" width="43" height="40" viewBox="0 0 43 40">
      <path d="M5.600 6v15M5.600 6L21.500 21 37.400 6v15" fill="none" stroke="#5d0041" strokeWidth="4" />
      <g fill="#5d0041">
        <circle cx="5.600" cy="6" r="5.600" />
        <circle cx="37.400" cy="6" r="5.600" />
        <circle cx="5.600" cy="20.500" r="5.600" />
        <circle cx="21.500" cy="20" r="5.700" />
        <circle cx="37.400" cy="20.500" r="5.600" />
      </g>
      <g fill="#015969">
        <circle cx="21.500" cy="6" r="5.500" />
        <circle cx="5.600" cy="34" r="5.600" />
        <circle cx="21.500" cy="34" r="5.600" />
        <circle cx="37.400" cy="34" r="5.600" />
      </g>
    </svg>
    <text x="56.500" y="24.300" fontFamily="Roboto, sans-serif" fontWeight="900" fontSize="23" fill="#404040" textLength="101" lengthAdjust="spacing">MENDER</text>
    <text x="57" y="36" fontFamily="Roboto, sans-serif" fontWeight="600" fontSize="9.500" fill="#404040" textLength="101" lengthAdjust="spacing">ENTERPRISE</text>
  </svg>
);

export default function App() {
  return (
    <Desktop>
      <GlobalStyle />
      <SystemBar>
        <SystemLeft>
          <Label $ls={0.16}>Activities</Label>
          <AppMenu>
            <Chrome size={15} gray />
            <Label $size={14.3} $ls={-0.12}>Google Chrome</Label>
            <Triangle size={9} />
          </AppMenu>
        </SystemLeft>
        <Label $size={14} $ls={-0.1}>Nov 10  16:52</Label>
        <Tray>
          <TraySlot $w={40}>
            <S>
              <circle cx="8" cy="8" r="8" fill="#1287c8" />
              <text x="8" y="12" textAnchor="middle" fontFamily="Open Sans, sans-serif" fontStyle="italic" fontWeight="700" fontSize="11" fill="#fff">hp</text>
            </S>
          </TraySlot>
          <TraySlot $w={40}>
            <S>
              <path d="M5 0h6c3 0 5 2 5 5v5c0 4-3 6-6 6H6c-4 0-6-3-6-6V5c0-3 2-5 5-5z" fill="#62a81b" />
              <path d="M4.700 8l2.500 2.500L11.500 6" fill="none" stroke="#fff" strokeWidth="1.700" />
            </S>
          </TraySlot>
          <TraySlot $w={40}>
            <S>
              <circle cx="8" cy="8" r="7.100" fill="none" stroke="#fff" strokeWidth="1.500" />
              <path d="M5 4.500l2.800 2.300L4.500 8.800M11 11.500L8.200 9.200l3.300-2" fill="none" stroke="#fff" strokeWidth="1.600" />
            </S>
          </TraySlot>
          <TraySlot $w={40}>
            <S>
              <path d="M8 .5c2 1.200 4 1.800 6 1.800 0 6-1.500 10.500-6 13.200C3.500 12.800 2 8.300 2 2.300 4 2.300 6 1.700 8 .5z" fill="#c9cdcb" />
              <circle cx="11" cy="11.500" r="4.300" fill="#2aa84f" />
              <path d="M9 11.500l1.500 1.500 2.500-2.800" fill="none" stroke="#fff" strokeWidth="1.200" />
            </S>
          </TraySlot>
          <TraySlot $w={64} $pr={9}>
            <Label $size={14} $ls={-0.3}>en</Label>
            <Triangle size={9} />
          </TraySlot>
          <TraySlot $w={38}>
            <S>
              <path d="M8 14.500L3.200 7.800C6 5.800 10 5.800 12.800 7.800z" fill="#ececec" />
              <path d="M1 5.500c4-3.500 10-3.500 14 0" fill="none" stroke="#ececec" strokeWidth="1.800" />
            </S>
          </TraySlot>
          <TraySlot $w={20}>
            <S>
              <path d="M0 5.500h2.500L7 2v12l-4.500-3.500H0z" fill="#ececec" />
              <path d="M9 5.500c1.300 1.400 1.300 3.600 0 5M11.300 3.500c2.400 2.600 2.400 6.400 0 9M13.500 1.500c3 4 3 9 0 13" fill="none" stroke="#ececec" strokeWidth="1.200" />
            </S>
          </TraySlot>
          <TraySlot $w={34}>
            <S>
              <path d="M6 1.500h4" stroke="#ececec" strokeWidth="2" />
              <rect x="3.500" y="2.500" width="9" height="12.500" rx="0.800" fill="none" stroke="#ececec" strokeWidth="1.300" />
              <path d="M5 11.500h6V14H5z" fill="#e95420" />
            </S>
          </TraySlot>
          <TraySlot $w={12}><Triangle size={9} /></TraySlot>
        </Tray>
      </SystemBar>

      <TabStrip>
        {browserTabs.map(([title, Icon], i) => (
          <BrowserTab key={i} $w={i < 10 ? 106 : 105} $active={i === 1} $divider={i > 2}>
            <Icon />
            <TabTitle>{title}</TabTitle>
            <TabClose><Cross /></TabClose>
          </BrowserTab>
        ))}
        <StripEnd>
          <svg width="12" height="12" viewBox="0 0 12 12"><path d="M6 0v12M0 6h12" stroke="#3c4043" strokeWidth="1.800" /></svg>
          <WindowButtons>
            <svg width="14" height="14" viewBox="0 0 14 14"><circle cx="7" cy="7" r="7" fill="#3c4043" /><path d="M3.800 5.500h6.400L7 9.500z" fill="#dee0e5" /></svg>
            <svg width="14" height="14" viewBox="-4 0 14 14"><path d="M0 12h10" stroke="#5f6368" strokeWidth="1.800" /></svg>
            <svg width="11" height="11" viewBox="0 0 11 11"><path d="M3.500 1h6.500v6H3.500zM3.500 3.500H1V10h6V7" fill="none" stroke="#5f6368" strokeWidth="1.500" /></svg>
            <Cross s={11} color="#5f6368" w={1.500} />
          </WindowButtons>
        </StripEnd>
      </TabStrip>

      <Toolbar>
        <NavButtons>
          <MdArrowBack size={20} />
          <MdArrowForward size={20} color="#bdc1c6" />
          <ReloadIcon />
        </NavButtons>
        <Omnibox>
          <MdLock size={14} />
          <Url>
            <Label $size={14} $ls={-0.31} $color="#202124">hosted.mender.io</Label>
            <Label $size={14} $ls={-0.12} $color="#5f6368">/ui/#/deployments/active</Label>
          </Url>
          <OmniActions>
            <MdZoomIn size={18} />
            <MdStarBorder size={18} />
          </OmniActions>
        </Omnibox>
        <Extensions>
          <ExtensionSlot>
            <S>
              <path d="M0 0h16v16H0z" fill="#1e2227" />
              <g fill="none" stroke="#61dafb" strokeWidth="1.100">
                <ellipse cx="8" cy="8" rx="6.500" ry="2.600" />
                <ellipse cx="8" cy="8" rx="6.500" ry="2.600" transform="rotate(60 8 8)" />
                <ellipse cx="8" cy="8" rx="6.500" ry="2.600" transform="rotate(120 8 8)" />
              </g>
              <circle cx="8" cy="8" r="1.300" fill="#61dafb" />
            </S>
          </ExtensionSlot>
          <ExtensionSlot>
            <S>
              <path d="M8 1l6 3.500v7L8 15l-6-3.500v-7z" fill="#b3b3b3" stroke="#b3b3b3" strokeLinejoin="round" />
              <path d="M6.500 3.500v9M6.500 9c.5-1.800 3.200-1.800 3.200.2v3.300" fill="none" stroke="#eee" strokeWidth="1.400" />
            </S>
          </ExtensionSlot>
          <ExtensionSlot>
            <S>
              <path d="M8 .5l7 3.300v8L8 15.500l-7-3.700v-8z" fill="#d5d5d5" stroke="#5e5e5e" strokeWidth="1.100" />
              <path d="M8 7.500l6.500-3.500v7.700L8 15z" fill="#a5a5a5" />
              <path d="M8 7.500L1.500 4 8 1l6.500 3z" fill="#efefef" />
            </S>
          </ExtensionSlot>
          <ExtensionSlot><LetterTile bg="#000" text="01" size={12} y={12.3} len={14} /></ExtensionSlot>
          <ExtensionSlot><MdExtension size={17} /></ExtensionSlot>
          <ExtensionSlot>
            <svg width="22" height="22" viewBox="0 0 22 22">
              <circle cx="11" cy="11" r="11" fill="#00513f" />
              <text x="11" y="15" textAnchor="middle" fontFamily="Noto Sans, sans-serif" fontSize="11.500" fill="#fff">K</text>
            </svg>
          </ExtensionSlot>
          <ExtensionSlot><MdMoreVert size={19} /></ExtensionSlot>
        </Extensions>
      </Toolbar>

      <BookmarkBar>
        {bookmarks.map(([title, Icon, w, ls, gap]) => (
          <Bookmark key={title} $w={w} $gap={gap}>
            <Icon />
            <Label $ls={ls}>{title}</Label>
          </Bookmark>
        ))}
        <Chevrons>
          <svg width="9" height="9" viewBox="0 0 9 9"><path d="M1 1l3 3.500L1 8M5 1l3 3.500L5 8" fill="none" stroke="#5f6368" strokeWidth="1.500" /></svg>
        </Chevrons>
        <BarDivider $m="0 11px 0 10px" />
        <Bookmark $w={154} $gap={7}>
          <FolderIcon />
          <Label $ls={0.03}>Other bookmarks</Label>
        </Bookmark>
        <BarDivider $m="0 11px 0 0" />
        <Bookmark $w={110}>
          <svg width="15" height="15" viewBox="0 0 16 16">
            <rect x="1" y="1.500" width="14" height="13" rx="1" fill="none" stroke="#5f6368" strokeWidth="1.400" />
            <path d="M3.500 5h2M3.500 8h2M3.500 11h2M7 5h5.500M7 8h5.500M7 11h5.500" stroke="#5f6368" strokeWidth="1.400" />
          </svg>
          <Label $ls={0.06} $color="#2a2c2f">Reading list</Label>
        </Bookmark>
      </BookmarkBar>

      <Page>
        <Banner>
          <MdAnnouncement size={20.500} />
          <BannerText>
            Learn more about Mender's new add-ons at <b>mender.io/plans/pricing</b>. <b>Visit our documentation</b> to learn how to enable add-on features
          </BannerText>
          <MdClose size={20.500} />
        </Banner>
        <AppHeader>
          <BrandLogo />
          <PlanInfo>
            <MdInfoOutline size={20} />
            Trial plan
          </PlanInfo>
          <Upgrade>
            <MdPayment size={25.500} />
            UPGRADE NOW
          </Upgrade>
          <HeaderRight>
            <Counter $w={160} $pr={54} $gap={12} $color="#237a88">
              1/10
              <MdDeveloperBoard size={25.500} />
            </Counter>
            <Counter $w={148} $pr={54} $gap={12} $color="#c4c4c4">
              0
              <Flip><MdRefresh size={25.500} /></Flip>
            </Counter>
            <User>
              <MdAccountCircle size={25.500} color="#c4c4c4" />
              <UserName>knud@navispy.com</UserName>
              <MdArrowDropDown size={27} />
            </User>
          </HeaderRight>
        </AppHeader>
        <Body>
          <Sidebar>
            {navItems.map((item) => (
              <NavItem key={item} $active={item === "DEPLOYMENTS"}>{item}</NavItem>
            ))}
            <SidebarFooter>
              <Help>Help</Help>
              <Version>Version: 3.1.0</Version>
              <License>License information</License>
            </SidebarFooter>
          </Sidebar>
          <Main>
            <MainTop>
              <TabList>
                <PageTab $active>Active</PageTab>
                <PageTab>Scheduled</PageTab>
                <PageTab>Finished</PageTab>
              </TabList>
              <Button $primary $w={239}>CREATE A DEPLOYMENT</Button>
            </MainTop>
            <Card>
              <SectionTitle>Pending</SectionTitle>
              <Details>
                {details.map(([term, value]) => (
                  <React.Fragment key={term}>
                    <Term>{term}</Term>
                    <Value>{value}</Value>
                  </React.Fragment>
                ))}
              </Details>
              <Actions>
                <Button $w={133}>View details</Button>
                <CancelIcon />
              </Actions>
            </Card>
          </Main>
        </Body>
        <StatusBubble>
          <Label $ls={0.22}>https://hosted.mender.io/ui/#/deployments/active</Label>
        </StatusBubble>
      </Page>

      <Dock>
        {dockApps.map(([Icon, count, active], i) => (
          <DockCell key={i} $active={active}>
            <Icon />
            <Dots>
              {Array.from({ length: count }, (_, k) => (
                <Dot key={k} />
              ))}
            </Dots>
          </DockCell>
        ))}
        <AppGrid>
          {Array.from({ length: 9 }, (_, k) => (
            <GridDot key={k} />
          ))}
        </AppGrid>
      </Dock>
    </Desktop>
  );
}
